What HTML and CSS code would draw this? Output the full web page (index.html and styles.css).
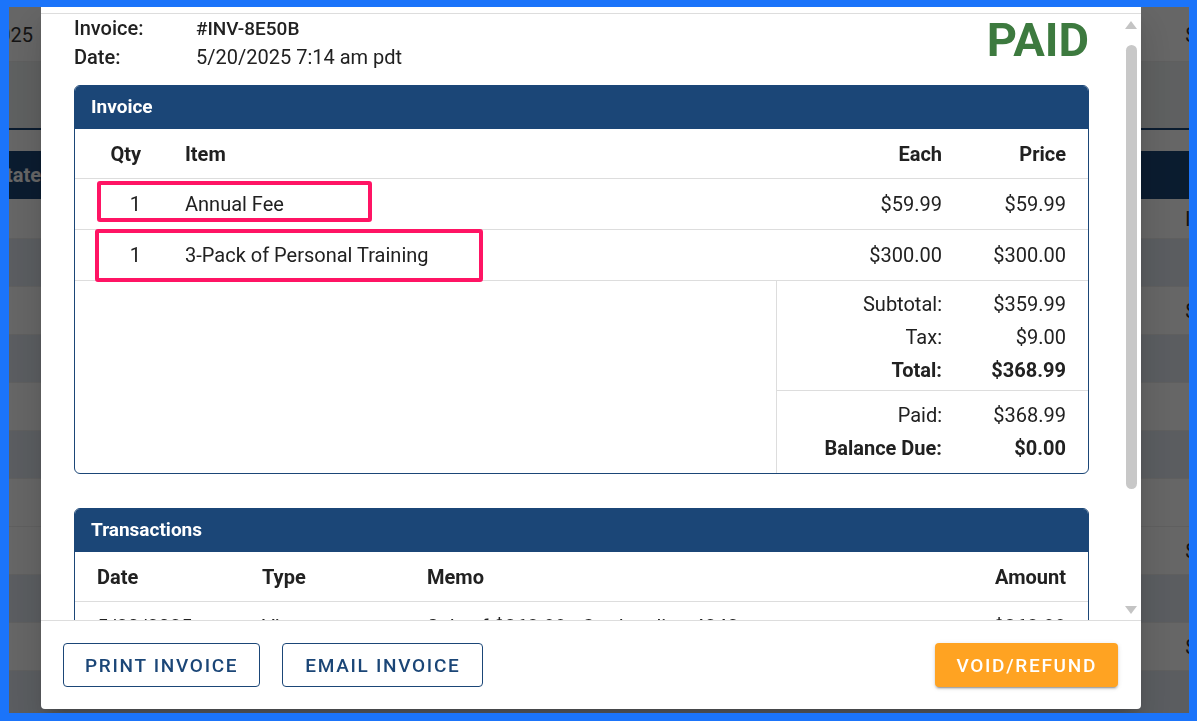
FILE: index.html
```html
<!DOCTYPE html>
<html>
<head>
    <title>Invoice #INV-8E50B</title>
    <link rel="stylesheet" href="styles.css">
</head>
<body>
    <!-- page behind the dialog -->
    <div class="page">
        <div class="page-row page-top"><span class="cell-l">5/20/2025</span><span class="cell-r">$</span></div>
        <div class="page-row page-band"></div>
        <div class="page-rule"></div>
        <div class="page-row page-head"><span class="cell-l wide">State</span><span class="cell-r"></span></div>
        <div class="page-row short"><span class="cell-l"></span><span class="cell-r">I</span></div>
        <div class="page-row alt"></div>
        <div class="page-row"><span class="cell-l"></span><span class="cell-r">$</span></div>
        <div class="page-row alt"></div>
        <div class="page-row"></div>
        <div class="page-row alt"></div>
        <div class="page-row"></div>
        <div class="page-row"><span class="cell-l"></span><span class="cell-r">$</span></div>
        <div class="page-row alt"></div>
        <div class="page-row"><span class="cell-l"></span><span class="cell-r">$</span></div>
        <div class="page-row alt"></div>
    </div>

    <div class="overlay"></div>

    <div class="modal">
        <div class="modal-top"></div>
        <div class="modal-body">
            <div class="body-scroll">
                <div class="doc-head">
                    <div class="meta">
                        <div class="meta-row"><span class="meta-label">Invoice:</span><span class="meta-value strong">#INV-8E50B</span></div>
                        <div class="meta-row"><span class="meta-label">Date:</span><span class="meta-value">5/20/2025 7:14 am pdt</span></div>
                    </div>
                    <div class="status">PAID</div>
                </div>

                <section class="card">
                    <h2 class="card-title">Invoice</h2>
                    <div class="line-grid line-head">
                        <div class="c-qty">Qty</div>
                        <div>Item</div>
                        <div class="c-num">Each</div>
                        <div class="c-num c-last">Price</div>
                    </div>
                    <div class="line-grid line-row">
                        <div class="c-qty">1</div>
                        <div>Annual Fee</div>
                        <div class="c-num">$59.99</div>
                        <div class="c-num c-last">$59.99</div>
                        <span class="mark mark-1"></span>
                    </div>
                    <div class="line-grid line-row">
                        <div class="c-qty">1</div>
                        <div>3-Pack of Personal Training</div>
                        <div class="c-num">$300.00</div>
                        <div class="c-num c-last">$300.00</div>
                        <span class="mark mark-2"></span>
                    </div>
                    <div class="totals">
                        <div class="totals-spacer"></div>
                        <div class="totals-box">
                            <div class="totals-group first">
                                <div class="t-row"><span>Subtotal:</span><span>$359.99</span></div>
                                <div class="t-row"><span>Tax:</span><span>$9.00</span></div>
                                <div class="t-row bold"><span>Total:</span><span>$368.99</span></div>
                            </div>
                            <div class="totals-group">
                                <div class="t-row"><span>Paid:</span><span>$368.99</span></div>
                                <div class="t-row bold"><span>Balance Due:</span><span>$0.00</span></div>
                            </div>
                        </div>
                    </div>
                </section>

                <section class="card">
                    <h2 class="card-title">Transactions</h2>
                    <div class="tx-grid line-head">
                        <div>Date</div>
                        <div>Type</div>
                        <div>Memo</div>
                        <div class="c-num">Amount</div>
                    </div>
                    <div class="tx-grid line-row">
                        <div>5/20/2025</div>
                        <div>Visa</div>
                        <div>Sale of $368.99 - Card ending 4242</div>
                        <div class="c-num">$368.99</div>
                    </div>
                </section>
            </div>
            <div class="scrollbar">
                <svg class="sb-arrow" width="12" height="8" viewBox="0 0 12 8"><polygon points="6,0 12,8 0,8" fill="#c4c4c4"/></svg>
                <div class="sb-thumb"></div>
                <div class="sb-space"></div>
                <svg class="sb-arrow down" width="12" height="8" viewBox="0 0 12 8"><polygon points="0,0 12,0 6,8" fill="#c4c4c4"/></svg>
            </div>
        </div>
        <div class="modal-footer">
            <button class="btn btn-outline">Print Invoice</button>
            <button class="btn btn-outline email">Email Invoice</button>
            <div class="footer-space"></div>
            <button class="btn btn-warn">Void/Refund</button>
        </div>
    </div>

    <div class="frame"></div>
</body>
</html>
```

FILE: styles.css
```css
html, body {
    margin: 0;
    height: 100%;
    overflow: hidden;
}

body {
    font-family: Roboto, "Liberation Sans", Arial, sans-serif;
    color: #212121;
    background: #fff;
}

/* background page */
.page {
    padding-top: 6px;
}

.page-row {
    box-sizing: border-box;
    height: 48px;
    display: flex;
    justify-content: space-between;
    align-items: center;
    border-bottom: 1px solid #eee;
    background: #fff;
    font-size: 20px;
    color: #333;
}

.page-row.alt {
    background: #e3e9f1;
}

.page-row.short {
    height: 40px;
}

.page-top {
    height: 56px;
    padding-top: 2px;
}

.page-band {
    height: 66px;
    background: #eef1f2;
}

.page-rule {
    height: 2px;
    background: #1b4677;
    margin-bottom: 21px;
}

.page-head {
    background: #1b4677;
    color: #fff;
    font-weight: bold;
    border-bottom: none;
}

.cell-l {
    width: 33px;
    display: flex;
    justify-content: flex-end;
    white-space: nowrap;
}

.cell-l.wide {
    width: 41px;
}

.cell-r {
    width: 12px;
    white-space: nowrap;
}

.overlay {
    position: fixed;
    inset: 0;
    background: rgba(0, 0, 0, 0.6);
}

.frame {
    position: fixed;
    inset: 0;
    border-style: solid;
    border-color: #1b74fa;
    border-width: 7px 8px 8px 9px;
    pointer-events: none;
}

/* dialog */
.modal {
    position: fixed;
    left: 41px;
    top: 0;
    width: 1100px;
    height: 709px;
    background: #fff;
    border-radius: 0 0 4px 4px;
    display: flex;
    flex-direction: column;
    box-shadow: 0 11px 15px -7px rgba(0,0,0,0.2), 0 24px 38px 3px rgba(0,0,0,0.14);
}

.modal-top {
    height: 13px;
    border-bottom: 1px solid #ddd;
}

.modal-body {
    flex: 1;
    display: flex;
    min-height: 0;
}

.body-scroll {
    flex: 1;
    overflow: hidden;
    padding: 0 35px 0 33px;
}

.scrollbar {
    width: 17px;
    display: flex;
    flex-direction: column;
}

.sb-arrow {
    display: block;
    margin: 7px 0 0 1px;
}

.sb-arrow.down {
    margin: 0 0 6px 1px;
}

.sb-thumb {
    width: 11px;
    height: 444px;
    margin: 16px 0 0 2px;
    background: #c8c8c8;
    border-radius: 6px;
}

.sb-space {
    flex: 1;
}

.doc-head {
    display: flex;
    justify-content: space-between;
    align-items: flex-start;
}

.meta-row {
    display: flex;
    height: 29px;
    line-height: 29px;
    font-size: 20px;
}

.meta-label {
    width: 122px;
    font-weight: 500;
}

.meta-value.strong {
    font-size: 19px;
    font-weight: 500;
}

.status {
    margin-top: 2px;
    font-size: 47px;
    line-height: 48px;
    font-weight: bold;
    color: #3d7a3f;
}

.card {
    margin: 13px 0 34px;
    border: 1px solid #1b4677;
    border-radius: 6px;
    overflow: hidden;
}

.card-title {
    margin: 0;
    height: 43px;
    line-height: 41px;
    padding-left: 16px;
    background: #1b4677;
    color: #fff;
    font-size: 19px;
    font-weight: bold;
}

.line-grid {
    display: grid;
    grid-template-columns: 110px 1fr 146px 146px;
    position: relative;
}

.tx-grid {
    display: grid;
    grid-template-columns: 165px 165px 1fr 150px;
    padding: 0 22px;
}

.line-head, .line-row {
    height: 50px;
    align-items: center;
    border-bottom: 1px solid #ddd;
    font-size: 20px;
}

.line-head {
    height: 49px;
    font-weight: bold;
}

.line-row {
    position: relative;
}

.c-qty {
    text-align: right;
    padding-right: 44px;
}

.c-num {
    text-align: right;
}

.c-last {
    padding-right: 22px;
}

/* highlight boxes drawn over the first two lines */
.mark {
    position: absolute;
    border: 4px solid #ff1464;
    border-radius: 3px;
    box-sizing: border-box;
}

.mark-1 {
    left: 22px;
    top: 2px;
    width: 275px;
    height: 41px;
}

.mark-2 {
    left: 20px;
    top: -1px;
    width: 388px;
    height: 53px;
}

.totals {
    display: flex;
}

.totals-spacer {
    flex: 1;
    border-right: 1px solid #ddd;
}

.totals-box {
    width: 311px;
}

.totals-group {
    padding: 8px 0;
}

.totals-group.first {
    padding: 7px 0 3px;
    border-bottom: 1px solid #ddd;
}

.t-row {
    display: grid;
    grid-template-columns: 165px 146px;
    height: 33px;
    line-height: 33px;
    font-size: 20px;
}

.t-row span {
    text-align: right;
}

.t-row span:last-child {
    padding-right: 22px;
}

.t-row.bold {
    font-weight: bold;
}

.modal-footer {
    border-top: 1px solid #ddd;
    display: flex;
    gap: 22px;
    padding: 22px 23px 22px 22px;
}

.footer-space {
    flex: 1;
}

.btn {
    height: 44px;
    padding: 0 21px;
    font-family: Roboto, "Liberation Sans", Arial, sans-serif;
    font-size: 19px;
    font-weight: 500;
    letter-spacing: 1.7px;
    text-transform: uppercase;
    border-radius: 4px;
    cursor: pointer;
}

.btn.email {
    padding: 0 22px;
}

.btn-outline {
    background: #fff;
    color: #1b4677;
    border: 1px solid #1b4677;
}

.btn-warn {
    background: #ffa322;
    color: #fff;
    border: none;
    box-shadow: 0 3px 1px -2px rgba(0,0,0,0.2), 0 2px 2px 0 rgba(0,0,0,0.14), 0 1px 5px 0 rgba(0,0,0,0.12);
}
```
